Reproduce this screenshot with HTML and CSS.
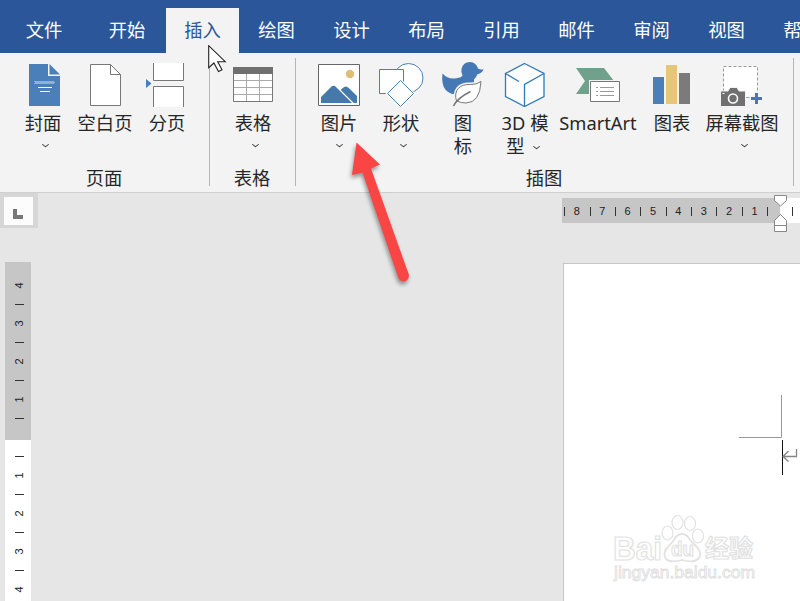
FILE: index.html
```html
<!DOCTYPE html>
<html lang="zh-CN">
<head>
<meta charset="utf-8">
<title>文档</title>
<link rel="stylesheet" href="styles.css">
</head>
<body>
<div class="app">
  <nav class="tabs">
    <span class="tab">文件</span><span class="tab">开始</span><span class="tab active">插入</span><span class="tab">绘图</span><span class="tab">设计</span><span class="tab">布局</span><span class="tab">引用</span><span class="tab">邮件</span><span class="tab">审阅</span><span class="tab">视图</span><span class="tab">帮助</span>
  </nav>

  <section class="ribbon">
    <div class="group g-pages">
      <div class="tools">
        <div class="tool">
          <svg class="icon" width="62" height="50" viewBox="0 0 62 50"><path fill="#4a7fba" d="M17 7h19v12h12v30H17z"/><path fill="#4a7fba" d="M37.500 7v10.500H48z"/><path d="M36.500 7v11.500H48" fill="none" stroke="#f3f3f3"/><path d="M22.500 24.500h20M23.500 25.500h20M22.500 26.500h20" stroke="#d7e5f3" stroke-dasharray="1 1"/><path d="M26 30.500h14M28 34.500h10" stroke="#fff"/></svg>
          <span class="label">封面</span><i class="chev shift"></i>
        </div>
        <div class="tool">
          <svg class="icon" width="62" height="50" viewBox="0 0 62 50"><path d="M16.500 7.500h20l10 10v31h-30z" fill="#fff" stroke="#777"/><path d="M36.500 7.500v10h10" fill="none" stroke="#777"/></svg>
          <span class="label">空白页</span>
        </div>
        <div class="tool">
          <svg class="icon" width="62" height="50" viewBox="0 0 62 50"><path d="M17.500 6v17.500h30V6M17.500 50V29.500h30V50" fill="#fff" stroke="#777"/><path d="M10 22l5.500 4.500L10 31z" fill="#4a7fba"/></svg>
          <span class="label">分页</span>
        </div>
      </div>
      <div class="caption">页面</div>
    </div>
    <div class="group g-table">
      <div class="tools">
        <div class="tool">
          <svg class="icon" width="62" height="50" viewBox="0 0 62 50"><path fill="#fff" stroke="#777" d="M11.500 10.500h39v34h-39z"/><path fill="#707070" d="M11 10h40v7H11z"/><path d="M24.500 17v27M37.500 17v27M12 23.500h38M12 30.500h38M12 37.500h38" stroke="#aaa"/></svg>
          <span class="label">表格</span><i class="chev shift"></i>
        </div>
      </div>
      <div class="caption">表格</div>
    </div>
    <div class="group g-art">
      <div class="tools">
        <div class="tool">
          <svg class="icon" width="62" height="50" viewBox="0 0 62 50"><path fill="#fff" stroke="#666" d="M10.500 7.500h41v41h-41z"/><circle cx="42" cy="17" r="4.200" fill="#dfbd77"/><path fill="#4579ac" d="M13 46v-6l10-10q2.500-2.500 5 0l16 16zM32.800 33l2-2q3-3 6 0l8.200 8V46h-3.200z"/></svg>
          <span class="label">图片</span><i class="chev"></i>
        </div>
        <div class="tool">
          <svg class="icon" width="62" height="50" viewBox="0 0 62 50"><g fill="#fff" stroke="#4a7fba"><circle cx="38.500" cy="21" r="14.500"/><path d="M9.500 12.500h24v24h-24z"/><path d="M30.500 21.500l15 15-15 15-15-15z" stroke="#f3f3f3" stroke-width="0"/><path d="M30.500 23.500l13 13-13 13-13-13z"/></g></svg>
          <span class="label">形状</span><i class="chev shift"></i>
        </div>
        <div class="tool">
          <svg class="icon" width="62" height="50" viewBox="0 0 62 50"><path fill="#4579b5" d="M10.500 16.500q5 5.500 12 5 7-.7 8-3-1.700-3-1-6.500Q31 5 38 5q6 .3 8 6.500 3 1.500 5.500.7-.8 3.500-6 5-.8 2-3.500 5.300V37H20q-8-3-9.300-10.500-1-5-.2-10z"/><path d="M24.500 45q-3-9 1.500-14 4-4.500 12-4 6 .2 11.500-3.500Q48 46.500 34 46.800q-5 .2-9.500-1.800z" fill="#fff" stroke="#f3f3f3" stroke-width="3"/><path d="M24.500 44q-2.500-8 2-12.800 4-4 12-3.700 6 .2 10.500-3Q48 45.500 34 46q-4 .2-9.500-2z" fill="#fff" stroke="#777"/><path d="M21.500 49q4-8 17-14.500" fill="none" stroke="#777" stroke-width="1.600"/></svg>
          <span class="label">图<br>标</span>
        </div>
        <div class="tool">
          <svg class="icon" width="62" height="50" viewBox="0 0 62 50"><path d="M30.500 6.500L50 16.500v23l-19.500 10-19-10v-23z" fill="#fcfdfe" stroke="#2f7bb9" stroke-width="1.300"/><path d="M11.500 16.500L25 24.500M50 16.500l-19.500 11v22" fill="none" stroke="#2f7bb9" stroke-width="1.300"/></svg>
          <span class="label">3D 模<br><span class="second">型<i class="chev inline"></i></span></span>
        </div>
        <div class="tool wide">
          <svg class="icon" width="84" height="50" viewBox="0 0 84 50"><path fill="#6fa18d" d="M20 11h28l10 13L47 37H20l9-13z"/><path fill="#fff" stroke="#f3f3f3" stroke-width="3" d="M34.500 24.500h29v20h-29z"/><path fill="#fff" stroke="#777" d="M34.500 24.500h29v20h-29z"/><path d="M40 30.500h2M44 30.500h14M40 34.500h2M44 34.500h14M40 38.500h2M44 38.500h14" stroke="#999"/></svg>
          <span class="label">SmartArt</span>
        </div>
        <div class="tool mid">
          <svg class="icon" width="64" height="50" viewBox="0 0 64 50"><path fill="#4a7fba" d="M13 20h11v27H13z"/><path fill="#e7c57b" d="M26 8h11v39H26z"/><path fill="#7b7b7b" d="M39 16h11v31H39z"/></svg>
          <span class="label">图表</span>
        </div>
        <div class="tool large">
          <svg class="icon" width="76" height="50" viewBox="0 0 76 50"><path fill="#fff" stroke="#999" stroke-dasharray="3 2" d="M19.500 9.500h34v31h-34z"/><path fill="#707070" stroke="#f3f3f3" stroke-width="1" d="M16.500 34h7.500l2-3.500h7l2 3.500h6.500v15.500h-25z"/><circle cx="29" cy="41.500" r="4.500" fill="#707070" stroke="#fff" stroke-width="1.600"/><path d="M18.500 36.500h2" stroke="#fff"/><path d="M46 41.500h13M52.500 35v13" stroke="#f3f3f3" stroke-width="6"/><path d="M42 40.500h3" stroke="#8aa9c8"/><path d="M47 41.500h11M52.500 36v11" stroke="#4579b5" stroke-width="3"/></svg>
          <span class="label">屏幕截图</span><i class="chev shot"></i>
        </div>
      </div>
      <div class="caption">插图</div>
    </div>
  </section>

  <main class="workspace">
    <aside class="side">
      <div class="selector"><span><svg width="11" height="11" viewBox="0 0 11 11"><path fill="#777" d="M0 0h4v6h6v4H0z"/></svg></span></div>
      <div class="vruler">
        <div class="vmargin"><b>4</b><i></i><b>3</b><i></i><b>2</b><i></i><b>1</b><i></i></div>
        <div class="vbody"><i></i><b>1</b><i></i><b>2</b><i></i><b>3</b><i></i><b>4</b></div>
      </div>
    </aside>
    <div class="canvas">
      <div class="hruler">
        <div class="hmargin"><i></i><b>8</b><i></i><b>7</b><i></i><b>6</b><i></i><b>5</b><i></i><b>4</b><i></i><b>3</b><i></i><b>2</b><i></i><b>1</b><i></i></div>
        <div class="hbody"><i></i></div>
        <svg class="indent" width="14" height="38" viewBox="0 0 14 38"><path d="M.5.500h12v5l-6 5.500-6-5.500zM.5 36.500v-11l6-6 6 6v11zM.5 30.500h12" fill="#fff" stroke="#888"/></svg>
      </div>
      <div class="page">
        <svg class="marks" width="62" height="82" viewBox="738 394 62 82"><path d="M739 437.500h42.500V395" fill="none" stroke="#999"/><path d="M782.500 440v35" stroke="#111"/><path d="M796.500 449v7.500H783.500M788.500 451l-5.500 5.500 5.500 5" fill="none" stroke="#858585" stroke-width="1.300"/></svg>
        <svg class="brand" width="150" height="72" viewBox="610 514 150 72">
          <g fill="#fff" stroke="#e2e2e2" stroke-width="1.200">
            <text class="bai" x="613" y="560" textLength="49" lengthAdjust="spacingAndGlyphs">Bai</text>
            <ellipse cx="667.500" cy="533" rx="5.500" ry="7"/><ellipse cx="677.500" cy="522.500" rx="5.500" ry="7"/><ellipse cx="690" cy="523.500" rx="5.500" ry="7"/><ellipse cx="698" cy="536" rx="5.500" ry="7"/>
            <path d="M682 534q5 0 8 6l7 7q6 7 1 12-4 4-16 1-12 3-16-1-4-6 2-12l6-7q3-6 8-6z" stroke-width="1.800"/>
            <text class="du" x="671" y="556" textLength="23" lengthAdjust="spacingAndGlyphs">du</text>
            <text class="jy" x="705" y="557">经验</text>
          </g>
          <text class="site" x="614" y="578" textLength="141" lengthAdjust="spacingAndGlyphs">jingyan.baidu.com</text>
        </svg>
      </div>
    </div>
  </main>

  <svg class="pointer" width="20" height="30" viewBox="0 0 20 30"><path d="M.7.700v22l5.200-4.700 4.600 8.500 3.500-1.700-4.300-8.100h7.500z" fill="#fff" stroke="#222" stroke-width="1.100"/></svg>
  <svg class="arrow" width="80" height="160" viewBox="340 132 80 160"><path d="M356.500 142.500l23.500 22-9 4 38 106.500q0 5-4.500 6.500-4 0-6-3.500L362.500 172.500l-10.500 2.500z" fill="#f94543"/></svg>
</div>
</body>
</html>
```
FILE: styles.css
```css
* { box-sizing: border-box; }
body { margin: 0; font-family: "Noto Sans", "Noto Sans CJK SC", sans-serif; font-size: 18.3px; color: #262626; }
.app { position: relative; width: 800px; height: 601px; overflow: hidden; display: flex; flex-direction: column; background: #e6e6e6; }

.tabs { height: 53px; flex: none; padding-top: 8px; background: #2b579a; display: grid; grid-template-columns: 88px 78px 73px repeat(8, 75px); }
.tab { height: 45px; line-height: 42px; text-align: center; color: #fff; font-family: "Noto Sans CJK SC", sans-serif; white-space: nowrap; }
.tab.active { background: #f3f3f3; color: #2b579a; }

.ribbon { height: 140px; flex: none; background: #f3f3f3; border-bottom: 1px solid #cfcfcf; display: flex; }
.group { position: relative; display: flex; flex-direction: column; justify-content: space-between; }
.group::after { content: ""; position: absolute; right: 0; top: 5px; bottom: 6px; width: 1px; background: #b5b5b5; }
.g-pages { width: 210px; }
.g-table { width: 86px; }
.g-art { width: 498px; }
.tools { display: flex; padding-left: 12px; }
.tool { width: 62px; display: flex; flex-direction: column; align-items: center; padding-top: 4px; }
.wide { width: 84px; }
.mid { width: 64px; }
.large { width: 76px; }
.icon { display: block; flex: none; height: 50px; margin-bottom: 4px; }
.label { line-height: 23px; text-align: center; white-space: nowrap; }
.chev { display: block; width: 5px; height: 5px; border: solid #333; border-width: 0 1px 1px 0; transform: scaleY(.8) rotate(45deg); margin-top: 8px; }
.shift { margin-left: 4px; }
.shot { margin-left: 5px; }
.second { display: block; padding-right: 5px; }
.chev.inline { display: inline-block; margin: 0 0 4px 9px; }
.caption { text-align: center; line-height: 24px; padding-bottom: 2px; }
.g-pages .caption, .g-table .caption { padding-right: 2px; }
.g-art .caption { padding-right: 2px; }

.workspace { flex: 1; min-height: 0; display: flex; }
.side { width: 38px; flex: none; }
.selector { height: 35px; padding: 4px 5px 3px 4px; background: #d6d6d6; }
.selector span { display: flex; height: 28px; background: #fcfcfc; padding: 12px 0 0 9px; }
.vruler { width: 26px; margin: 34px 0 0 5px; font: 11px "Liberation Sans", sans-serif; color: #222; }
.vruler b, .hruler b { font-weight: 400; display: flex; align-items: center; justify-content: center; }
.vruler b { height: 19px; transform: rotate(-90deg); margin-left: 1px; }
.vruler b, .vruler i { flex: none; }
.vruler i { height: 19px; display: flex; align-items: center; justify-content: center; margin-left: 3px; }
.vruler i::before { content: ""; width: 9px; height: 1px; background: #333; }
.vmargin { height: 178px; padding-top: 14px; background: #c6c6c6; }
.vbody { height: 161px; padding-top: 7px; background: #fff; overflow: hidden; }

.canvas { flex: 1; padding: 5px 0 0 524px; min-width: 0; }
.hruler { position: relative; display: flex; height: 25px; font: 11px "Liberation Sans", sans-serif; color: #222; }
.hmargin { width: 218px; flex: none; display: flex; background: #c6c6c6; padding-right: 6px; justify-content: flex-end; }
.hmargin b, .hmargin i { width: 12.7px; flex: none; padding-top: 1px; }
.hmargin b { padding-right: 1px; }
.hmargin i, .hbody i { display: flex; align-items: center; justify-content: center; padding-top: 1px; }
.hmargin i::before, .hbody i::before { content: ""; width: 1px; height: 9px; background: #333; }
.hbody { flex: 1; display: flex; background: #fff; padding-left: 12px; }
.indent { position: absolute; left: 212px; top: -3px; }
.page { height: 338px; margin: 40px 0 0 1px; border: solid #c6c6c6; border-width: 1px 0 0 1px; background: #fff; display: flex; flex-direction: column; align-items: flex-start; }
.marks { margin: 130px 0 0 174px; flex: none; }
.brand { margin: 38px 0 0 46px; flex: none; }
.bai { font: 700 33px "Liberation Sans", sans-serif; }
.du { font: 700 20px "Liberation Sans", sans-serif; }
.jy { font: 700 24px "Noto Sans CJK SC", sans-serif; }
.site { font: 16px "Liberation Sans", sans-serif; fill: #fff; stroke: #dedede; stroke-width: .8px; }

.pointer { position: absolute; left: 208px; top: 45px; }
.arrow { position: absolute; left: 340px; top: 132px; overflow: visible; filter: drop-shadow(-1px 3px 2px rgba(0,0,0,.4)); }
```
